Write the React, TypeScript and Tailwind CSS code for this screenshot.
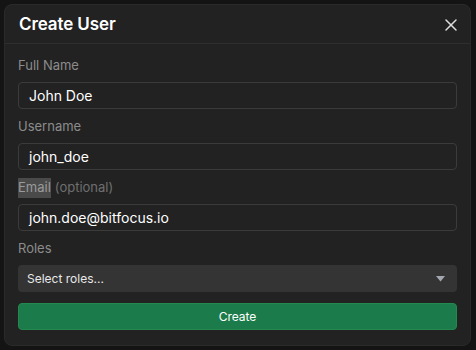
import { X } from 'lucide-react';

function Field({ label, value, optional }: { label: string; value: string; optional?: boolean }) {
  return (
    <div className="flex flex-col">
      <div className="h-[20px] mb-[6px] flex items-center text-[13px] text-[#8c8c8c]">
        {optional ? (
          <>
            <span className="bg-[#4a4a4a] text-[#9a9a9a]">{label}</span>
            <span className="ml-[4px] text-[#6f6f6f]">(optional)</span>
          </>
        ) : (
          label
        )}
      </div>
      <div className="h-[27px] rounded-[4px] border border-[#3b3b3b] bg-[#222222] px-[10px] flex items-center text-[14px] text-white">
        {value}
      </div>
    </div>
  );
}

export default function App() {
  return (
    <div
      className="w-[476px] h-[350px] bg-[#141414] pl-[4px] pt-[4px]"
      style={{ fontFamily: 'Inter, "Noto Sans", sans-serif' }}
    >
      <div className="w-[467px] h-[342px] rounded-[8px] border border-[#2a2a2a] bg-[#222222] flex flex-col">
        <div className="h-[39px] flex items-center justify-between pl-[14px] pr-[9px] pt-[2px] border-b border-[#2e2e2e]">
          <span className="text-[17px] font-semibold text-white tracking-[-0.1px]">Create User</span>
          <X size={20} strokeWidth={1.8} className="text-[#dddddd]" />
        </div>
        <div className="flex flex-col gap-[8px] px-[13px] pt-[12px]">
          <Field label="Full Name" value="John Doe" />
          <Field label="Username" value="john_doe" />
          <Field label="Email" value="john.doe@bitfocus.io" optional />
          <div className="flex flex-col">
            <div className="h-[20px] mb-[6px] flex items-center text-[13px] text-[#8c8c8c]">Roles</div>
            <div className="h-[27px] rounded-[4px] bg-[#343434] pl-[9px] pr-[12px] flex items-center justify-between text-[12px] text-[#e8e8e8]">
              <span>Select roles...</span>
              <svg width="9" height="6" viewBox="0 0 9 6">
                <path d="M0 0 H9 L4.5 5.5 Z" fill="#a3a8b0" />
              </svg>
            </div>
          </div>
          <button className="mt-[3px] h-[27px] rounded-[4px] bg-[#1c7b4a] border border-[#23894f] text-[12px] text-white flex items-center justify-center">
            Create
          </button>
        </div>
      </div>
    </div>
  );
}
